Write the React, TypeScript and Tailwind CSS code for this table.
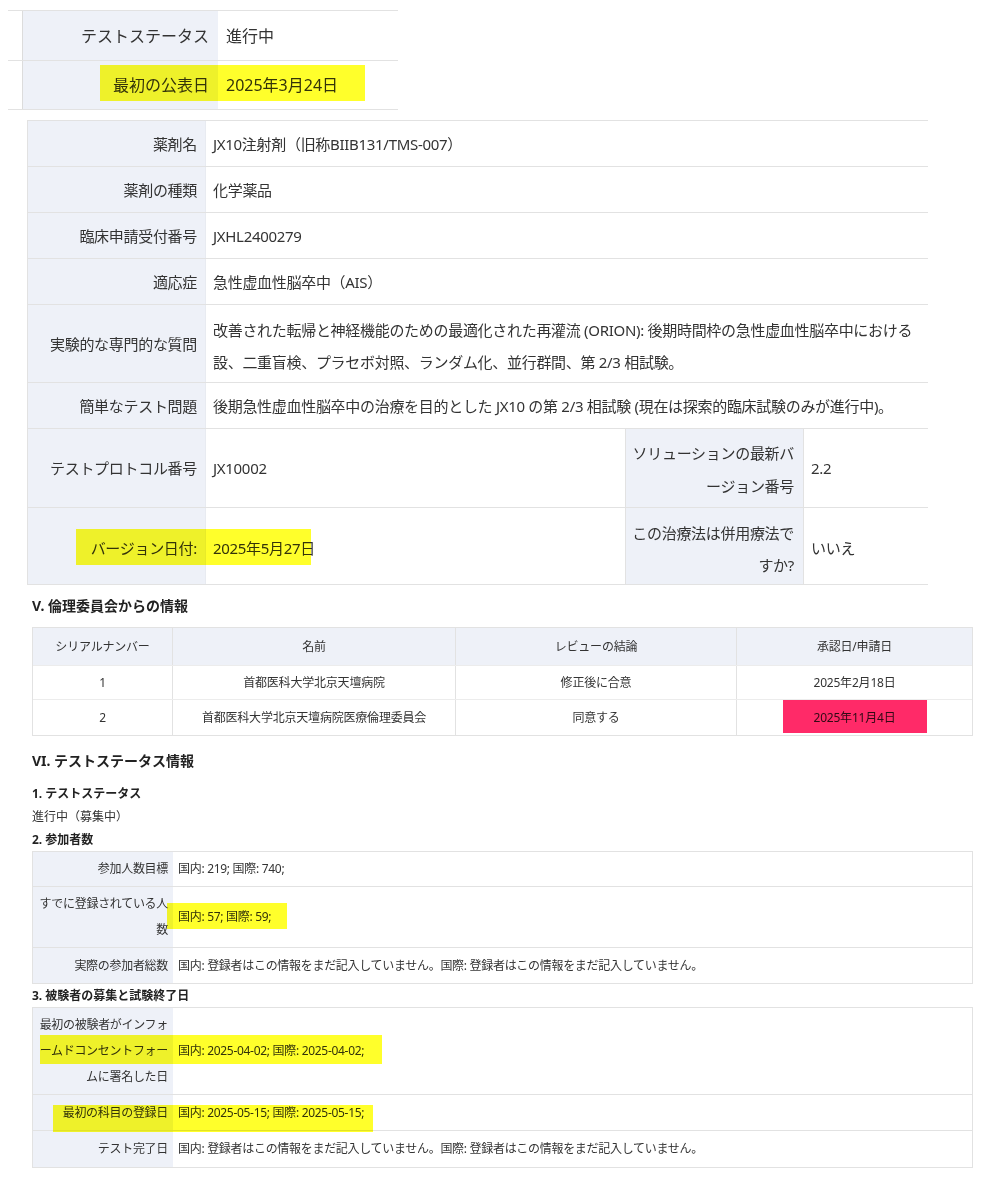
import React from 'react';

const LB = 'bg-[#eef1f8]';
const LINE = 'border-[#e2e2e2]';

type Hl = { x: number; y: number; w: number; h: number; c: string };

// marker highlights drawn over the screenshot
const MARKS: Hl[] = [
  { x: 100, y: 65, w: 265, h: 36, c: 'bg-[#ffff2b]' },
  { x: 76, y: 529, w: 235, h: 36, c: 'bg-[#ffff2b]' },
  { x: 783, y: 700, w: 144, h: 33, c: 'bg-[#ff2a68]' },
  { x: 167, y: 903, w: 120, h: 26, c: 'bg-[#ffff2b]' },
  { x: 40, y: 1035, w: 342, h: 29, c: 'bg-[#ffff2b]' },
  { x: 53, y: 1105, w: 320, h: 27, c: 'bg-[#ffff2b]' },
];

function Mark({ x, y, w, h, c }: Hl) {
  return (
    <div
      className={`absolute mix-blend-multiply pointer-events-none ${c}`}
      style={{ left: x, top: y, width: w, height: h }}
    />
  );
}

function MainRow({ label, h, children }: { label: React.ReactNode; h: string; children: React.ReactNode }) {
  return (
    <div className={`flex border-b ${LINE} ${h}`}>
      <div className={`w-[178px] shrink-0 ${LB} border-r border-[#e8ebf1] flex items-center justify-end pr-[8px] text-right leading-[32px] whitespace-nowrap`}>
        {label}
      </div>
      <div className="flex-1 flex items-center pl-[7px] leading-[32px] whitespace-nowrap">{children}</div>
    </div>
  );
}

function SmallRow({ label, h, children }: { label: React.ReactNode; h: string; children: React.ReactNode }) {
  return (
    <div className={`flex border-b ${LINE} last:border-b-0 ${h}`}>
      <div className={`w-[140px] shrink-0 ${LB} flex items-center justify-end pr-[5px] text-right leading-[26px] whitespace-nowrap`}>
        {label}
      </div>
      <div className="flex-1 flex items-center pl-[5px] leading-[26px] whitespace-nowrap">{children}</div>
    </div>
  );
}

export default function App() {
  return (
    <div className="relative w-[998px] h-[1177px] bg-white text-[#333] [font-family:'Noto_Sans','Noto_Sans_CJK_JP',sans-serif] overflow-hidden">
      {/* top status table */}
      <div className={`mt-[10px] ml-[8px] w-[390px] border-t ${LINE} text-[16px]`}>
        <div className={`flex h-[50px] border-b ${LINE}`}>
          <div className="w-[14px]" />
          <div className={`w-[196px] ${LB} border-l border-[#dcdcdc] flex items-center justify-end pr-[9px]`}>テストステータス</div>
          <div className="flex items-center pl-[8px]">進行中</div>
        </div>
        <div className={`flex h-[49px] border-b ${LINE}`}>
          <div className="w-[14px]" />
          <div className={`w-[196px] ${LB} border-l border-[#dcdcdc] flex items-center justify-end pr-[9px]`}>最初の公表日</div>
          <div className="flex items-center pl-[8px]">2025年3月24日</div>
        </div>
      </div>

      {/* drug info table */}
      <div className={`mt-[10px] ml-[27px] w-[901px] border-t border-l ${LINE} text-[15px] tracking-[-0.3px]`}>
        <MainRow label="薬剤名" h="h-[46px]">JX10注射剤（旧称BIIB131/TMS-007）</MainRow>
        <MainRow label="薬剤の種類" h="h-[46px]">化学薬品</MainRow>
        <MainRow label="臨床申請受付番号" h="h-[46px]">JXHL2400279</MainRow>
        <MainRow label="適応症" h="h-[46px]">急性虚血性脳卒中（AIS）</MainRow>
        <MainRow label="実験的な専門的な質問" h="h-[78px]">
          <div className="pt-[5px]">
            改善された転帰と神経機能のための最適化された再灌流 (ORION): 後期時間枠の急性虚血性脳卒中における
            <br />
            設、二重盲検、プラセボ対照、ランダム化、並行群間、第 2/3 相試験。
          </div>
        </MainRow>
        <MainRow label="簡単なテスト問題" h="h-[46px]">
          後期急性虚血性脳卒中の治療を目的とした JX10 の第 2/3 相試験 (現在は探索的臨床試験のみが進行中)。
        </MainRow>
        <div className={`flex border-b ${LINE} h-[79px]`}>
          <div className={`w-[178px] shrink-0 ${LB} border-r border-[#e8ebf1] flex items-center justify-end pr-[8px]`}>テストプロトコル番号</div>
          <div className="w-[419px] flex items-center pl-[7px]">JX10002</div>
          <div className={`w-[179px] ${LB} border-l border-r ${LINE} flex items-center justify-end pr-[9px] text-right leading-[33px] pt-[4px] whitespace-nowrap`}>
            <span>ソリューションの最新バ<br />ージョン番号</span>
          </div>
          <div className="flex-1 flex items-center pl-[7px]">2.2</div>
        </div>
        <div className={`flex border-b ${LINE} h-[77px]`}>
          <div className={`w-[178px] shrink-0 ${LB} border-r border-[#e8ebf1] flex items-center justify-end pr-[8px] pt-[4px]`}>バージョン日付:</div>
          <div className="w-[419px] flex items-center pl-[7px] pt-[4px]">2025年5月27日</div>
          <div className={`w-[179px] ${LB} border-l border-r ${LINE} flex items-center justify-end pr-[9px] text-right leading-[32px] pt-[5px] whitespace-nowrap`}>
            <span>この治療法は併用療法で<br />すか?</span>
          </div>
          <div className="flex-1 flex items-center pl-[7px] pt-[4px]">いいえ</div>
        </div>
      </div>

      {/* V. ethics */}
      <div className="ml-[32px] mt-[11px] text-[14px] font-bold leading-[20px] text-[#222]">V. 倫理委員会からの情報</div>
      <div className={`ml-[32px] mt-[11px] w-[941px] border ${LINE} text-[12px] tracking-[-0.2px]`}>
        <div className={`grid grid-cols-[140px_283px_281px_1fr] h-[37px] ${LB} text-center items-center`}>
          <div className={`h-full flex items-center justify-center border-r ${LINE}`}>シリアルナンバー</div>
          <div className={`h-full flex items-center justify-center border-r ${LINE}`}>名前</div>
          <div className={`h-full flex items-center justify-center border-r ${LINE}`}>レビューの結論</div>
          <div className="h-full flex items-center justify-center">承認日/申請日</div>
        </div>
        {[
          ['1', '首都医科大学北京天壇病院', '修正後に合意', '2025年2月18日', 'h-[34px]'],
          ['2', '首都医科大学北京天壇病院医療倫理委員会', '同意する', '2025年11月4日', 'h-[36px]'],
        ].map((r) => (
          <div key={r[0]} className={`grid grid-cols-[140px_283px_281px_1fr] border-t border-[#ececec] ${r[4]}`}>
            <div className={`flex items-center justify-center border-r ${LINE}`}>{r[0]}</div>
            <div className={`flex items-center justify-center border-r ${LINE}`}>{r[1]}</div>
            <div className={`flex items-center justify-center border-r ${LINE}`}>{r[2]}</div>
            <div className="flex items-center justify-center">{r[3]}</div>
          </div>
        ))}
      </div>

      {/* VI. status */}
      <div className="ml-[32px] mt-[14px] text-[14px] font-bold leading-[22px] text-[#222]">VI. テストステータス情報</div>
      <div className="ml-[32px] mt-[10px] text-[12px] leading-[23px]">
        <div className="font-bold text-[#222]">1. テストステータス</div>
        <div>進行中（募集中）</div>
        <div className="font-bold text-[#222]">2. 参加者数</div>
      </div>
      <div className={`ml-[32px] w-[941px] border ${LINE} text-[12px] tracking-[-0.3px]`}>
        <SmallRow label="参加人数目標" h="h-[35px]">国内: 219; 国際: 740;</SmallRow>
        <SmallRow label={<span>すでに登録されている人<br />数</span>} h="h-[61px]">国内: 57; 国際: 59;</SmallRow>
        <SmallRow label="実際の参加者総数" h="h-[35px]">
          国内: 登録者はこの情報をまだ記入していません。国際: 登録者はこの情報をまだ記入していません。
        </SmallRow>
      </div>
      <div className="ml-[32px] text-[12px] leading-[23px] font-bold text-[#222]">3. 被験者の募集と試験終了日</div>
      <div className={`ml-[32px] w-[941px] border ${LINE} text-[12px] tracking-[-0.3px]`}>
        <SmallRow label={<span>最初の被験者がインフォ<br />ームドコンセントフォー<br />ムに署名した日</span>} h="h-[87px]">
          国内: 2025-04-02; 国際: 2025-04-02;
        </SmallRow>
        <SmallRow label="最初の科目の登録日" h="h-[36px]">国内: 2025-05-15; 国際: 2025-05-15;</SmallRow>
        <SmallRow label="テスト完了日" h="h-[36px]">
          国内: 登録者はこの情報をまだ記入していません。国際: 登録者はこの情報をまだ記入していません。
        </SmallRow>
      </div>

      {MARKS.map((m, i) => (
        <Mark key={i} {...m} />
      ))}
    </div>
  );
}
